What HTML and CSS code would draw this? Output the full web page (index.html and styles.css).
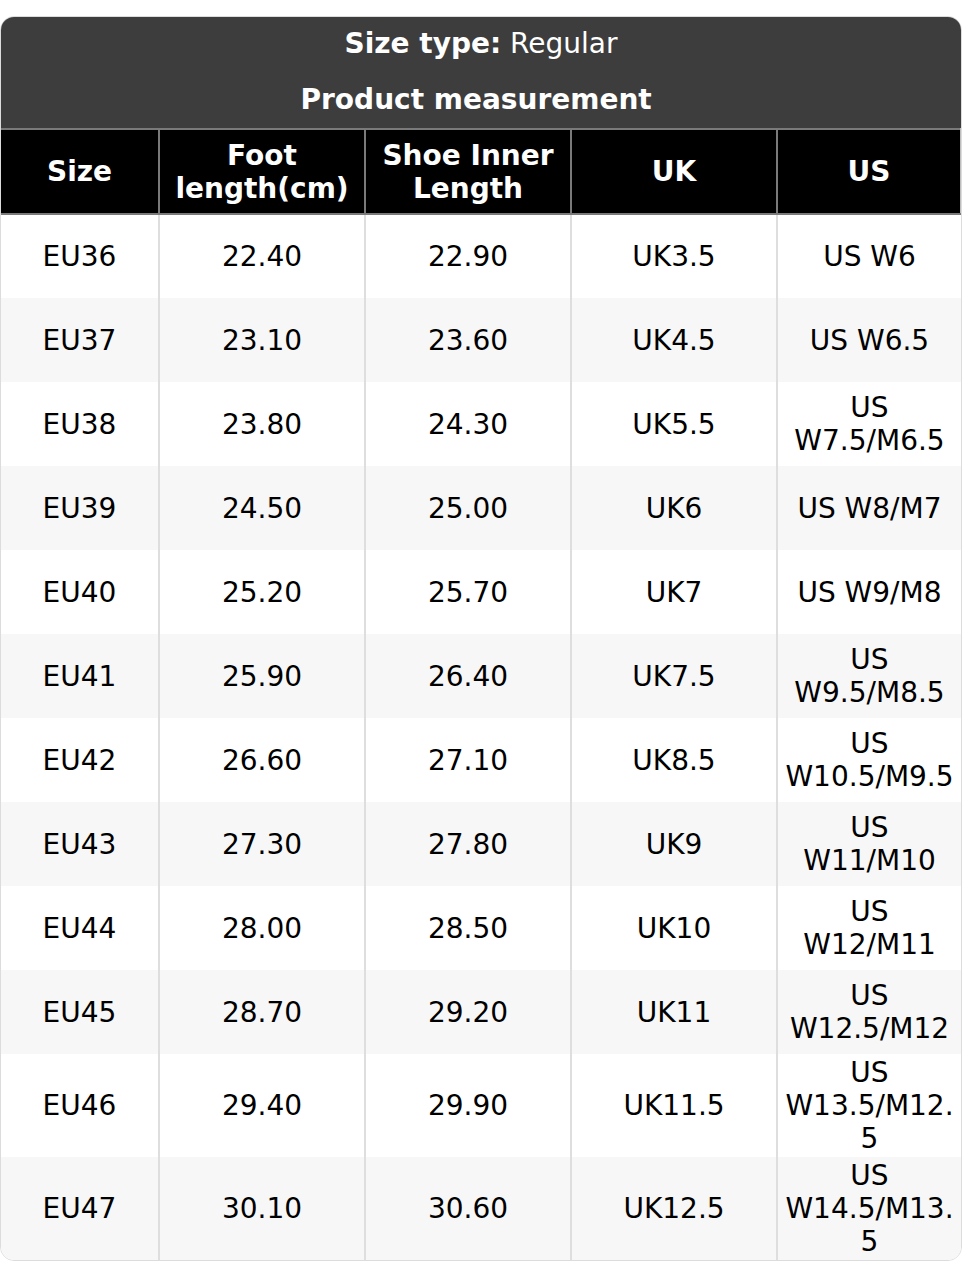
FILE: index.html
```html
<!DOCTYPE html>
<html>
<head>
<meta charset="utf-8">
<link rel="stylesheet" href="styles.css">
</head>
<body>
<div class="chart">
  <div class="title">
    <div class="title-line"><b>Size type:</b> Regular</div>
    <div class="title-line"><b>Product measurement&nbsp;</b></div>
  </div>
  <table class="sizes">
    <colgroup>
      <col class="c1"><col class="c2"><col class="c3"><col class="c4"><col class="c5">
    </colgroup>
    <thead>
      <tr><th>Size</th><th>Foot length(cm)</th><th>Shoe Inner Length</th><th>UK</th><th>US</th></tr>
    </thead>
    <tbody>
      <tr><td>EU36</td><td>22.40</td><td>22.90</td><td>UK3.5</td><td>US W6</td></tr>
      <tr><td>EU37</td><td>23.10</td><td>23.60</td><td>UK4.5</td><td>US W6.5</td></tr>
      <tr><td>EU38</td><td>23.80</td><td>24.30</td><td>UK5.5</td><td>US W7.5/M6.5</td></tr>
      <tr><td>EU39</td><td>24.50</td><td>25.00</td><td>UK6</td><td>US W8/M7</td></tr>
      <tr><td>EU40</td><td>25.20</td><td>25.70</td><td>UK7</td><td>US W9/M8</td></tr>
      <tr><td>EU41</td><td>25.90</td><td>26.40</td><td>UK7.5</td><td>US W9.5/M8.5</td></tr>
      <tr><td>EU42</td><td>26.60</td><td>27.10</td><td>UK8.5</td><td>US W10.5/M9.5</td></tr>
      <tr><td>EU43</td><td>27.30</td><td>27.80</td><td>UK9</td><td>US W11/M10</td></tr>
      <tr><td>EU44</td><td>28.00</td><td>28.50</td><td>UK10</td><td>US W12/M11</td></tr>
      <tr><td>EU45</td><td>28.70</td><td>29.20</td><td>UK11</td><td>US W12.5/M12</td></tr>
      <tr><td>EU46</td><td>29.40</td><td>29.90</td><td>UK11.5</td><td>US W13.5/M12.5</td></tr>
      <tr><td>EU47</td><td>30.10</td><td>30.60</td><td>UK12.5</td><td>US W14.5/M13.5</td></tr>
    </tbody>
  </table>
</div>
</body>
</html>
```
FILE: styles.css
```css
html, body {
  margin: 0;
  padding: 0;
  background: #ffffff;
}
body {
  padding-top: 16px;
  font-family: "DejaVu Sans", sans-serif;
  font-size: 28px;
  color: #000;
}
.chart {
  width: 962px;
  box-sizing: border-box;
  border: 1px solid #dcdcdc;
  border-radius: 14px;
  overflow: hidden;
}
.title {
  background: #3d3d3d;
  color: #fff;
  text-align: center;
}
.title-line {
  line-height: 34px;
  padding: 11px 0;
}
.title-line:first-child {
  padding: 10px 0 11px;
}
.sizes {
  width: 100%;
  border-collapse: collapse;
  table-layout: fixed;
}
.c1 { width: 158px; }
.c2 { width: 206px; }
.c3 { width: 206px; }
.c4 { width: 206px; }
.c5 { width: 184px; }
.sizes th {
  background: #000;
  color: #fff;
  font-weight: bold;
  line-height: 33px;
  height: 85px;
  padding: 0 6px;
  border: 2px solid #7a7a7a;
  box-sizing: border-box;
  text-align: center;
  vertical-align: middle;
}
.sizes th:first-child { border-left: none; }
.sizes th:last-child { border-right-color: #bdbdbd; }
.sizes td {
  height: 84px;
  line-height: 33px;
  padding: 2px 6px;
  box-sizing: border-box;
  text-align: center;
  vertical-align: middle;
  border-left: 2px solid #dedede;
  border-right: 2px solid #dedede;
  overflow-wrap: anywhere;
  color: #000;
}
.sizes td:first-child { border-left: none; }
.sizes td:last-child { border-right: none; }
.sizes tbody tr:nth-child(even) td {
  background: #f7f7f7;
}
```
